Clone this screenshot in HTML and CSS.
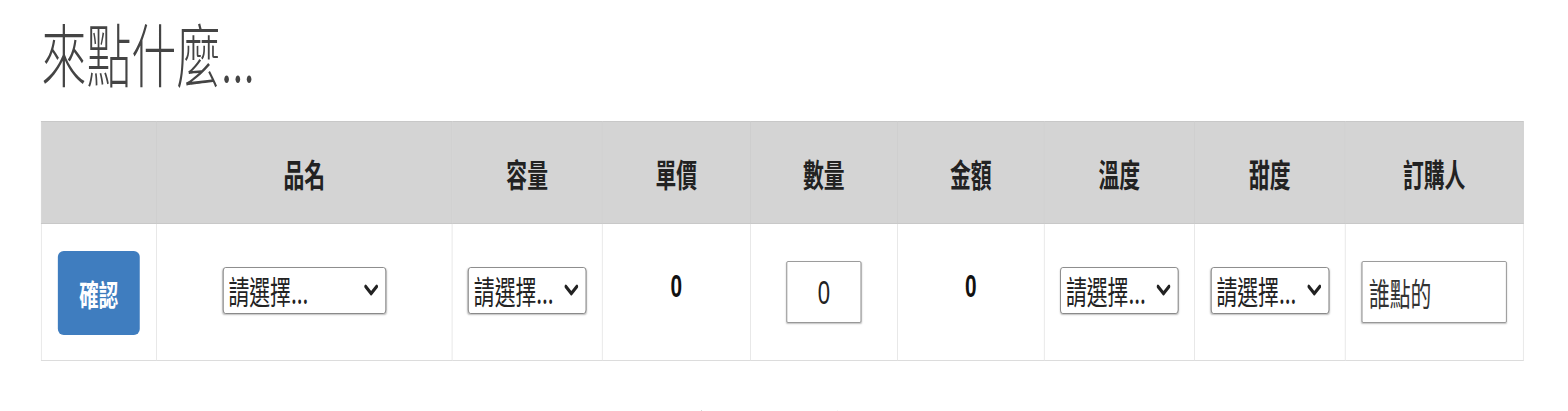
FILE: index.html
```html
<!DOCTYPE html>
<html lang="zh-Hant">
<head>
<meta charset="utf-8">
<title>來點什麼...</title>
<link rel="stylesheet" href="styles.css">
</head>
<body>
<div class="page">
  <h1 class="title">來點什麼...</h1>
  <table class="order">
    <colgroup>
      <col class="c-btn"><col class="c-name"><col class="c-size"><col class="c-price"><col class="c-qty"><col class="c-total"><col class="c-temp"><col class="c-sweet"><col class="c-who">
    </colgroup>
    <thead>
      <tr>
        <th></th><th>品名</th><th>容量</th><th>單價</th><th>數量</th><th>金額</th><th>溫度</th><th>甜度</th><th>訂購人</th>
      </tr>
    </thead>
    <tbody>
      <tr>
        <td><button class="confirm" type="button">確認</button></td>
        <td><select class="pick pick-wide"><option>請選擇...</option></select></td>
        <td><select class="pick"><option>請選擇...</option></select></td>
        <td class="num">0</td>
        <td><input class="qty" type="text" value="0"></td>
        <td class="num">0</td>
        <td><select class="pick"><option>請選擇...</option></select></td>
        <td><select class="pick"><option>請選擇...</option></select></td>
        <td><input class="who" type="text" placeholder="誰點的"></td>
      </tr>
    </tbody>
  </table>
  <h2 class="subtitle">訂單明細</h2>
</div>
</body>
</html>
```

FILE: styles.css
```css
html, body {
  margin: 0;
  padding: 0;
  background: #ffffff;
  overflow: hidden;
}

.page {
  width: 2412px;
  padding-top: 18px;
  transform: scaleX(0.65);
  transform-origin: 0 0;
  font-family: "Noto Sans CJK TC", "Liberation Sans", sans-serif;
  color: #222;
}

.title {
  margin: 0 0 34px 64px;
  font-size: 69px;
  line-height: 69px;
  font-weight: 300;
  color: #444;
}

.order {
  margin-left: 63px;
  width: 2280px;
  table-layout: fixed;
  border-collapse: collapse;
  border: 1px solid #d0d0d0;
}

.c-btn { width: 177px; }
.c-name { width: 455px; }
.c-size { width: 231px; }
.c-price { width: 228px; }
.c-qty { width: 226px; }
.c-total { width: 226px; }
.c-temp { width: 231px; }
.c-sweet { width: 232px; }
.c-who { width: 274px; }

.order th {
  height: 101px;
  padding: 0;
  background: #d4d4d4;
  border: 1px solid #c8c8c8;
  font-size: 32px;
  font-weight: 700;
  color: #222;
  text-align: center;
  vertical-align: middle;
}

.order td {
  height: 136px;
  padding: 0;
  border: 1px solid #dcdcdc;
  text-align: center;
  vertical-align: middle;
  background: #fff;
}

.confirm {
  width: 126px;
  height: 84px;
  border: none;
  border-radius: 9px / 6px;
  background: #3f7dbf;
  color: #fff;
  font-family: "Noto Sans CJK TC", sans-serif;
  font-size: 30px;
  font-weight: 700;
  padding: 0;
  margin-top: 1px;
}

.pick {
  -webkit-appearance: none;
  appearance: none;
  width: 182px;
  height: 47px;
  font-family: "Noto Sans CJK TC", sans-serif;
  font-size: 32px;
  line-height: 45px;
  color: #222;
  padding: 0 30px 0 8px;
  border: 1px solid #777;
  border-radius: 4px;
  background-color: #fff;
  background-image: url("data:image/svg+xml,%3Csvg xmlns='http://www.w3.org/2000/svg' width='22' height='12' viewBox='0 0 22 12'%3E%3Cpath d='M2.5 2.5 L11 9.5 L19.5 2.5' fill='none' stroke='%23222' stroke-width='4' stroke-linecap='round' stroke-linejoin='round'/%3E%3C/svg%3E");
  background-repeat: no-repeat;
  background-position: right 11px center;
  background-size: 22px 12px;
  box-shadow: 0 1px 2px rgba(0,0,0,0.25);
  margin-top: -4px;
  text-overflow: ellipsis;
}

.pick-wide {
  width: 251px;
}

.num {
  font-family: "Liberation Sans", sans-serif;
  font-size: 32px;
  font-weight: 700;
  color: #111;
}

.order td.num {
  vertical-align: top;
  padding-top: 44px;
  height: 92px;
}

.qty, .who {
  height: 62px;
  box-sizing: border-box;
  border: 1px solid #888;
  border-radius: 2px;
  box-shadow: 0 1px 2px rgba(0,0,0,0.25);
  background: #fff;
  color: #222;
}

.qty {
  width: 115px;
  font-family: "Liberation Sans", sans-serif;
  font-size: 34px;
  text-align: center;
  padding: 0;
  margin-top: 0;
}

.who {
  width: 223px;
  font-family: "Noto Sans CJK TC", sans-serif;
  font-size: 32px;
  padding: 0 0 0 10px;
  margin-top: 0;
}

.who::placeholder {
  color: #333;
  opacity: 1;
}

.subtitle {
  margin: 44px 0 0 0;
  padding-left: 63px;
  width: 2280px;
  text-align: center;
  font-size: 69px;
  line-height: 69px;
  font-weight: 300;
  color: #444;
}
```
